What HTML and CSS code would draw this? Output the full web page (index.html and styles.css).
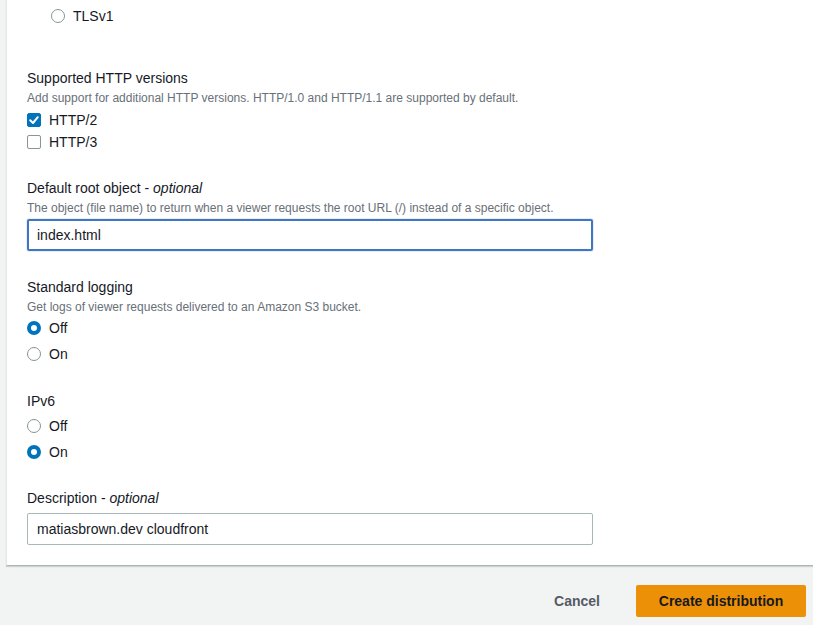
FILE: index.html
```html
<!DOCTYPE html>
<html lang="en">
<head>
<meta charset="utf-8">
<title>Create distribution</title>
<link rel="stylesheet" href="styles.css">
</head>
<body>
<div class="card">
  <div class="opt radio-row indent"><span class="radio"></span><span>TLSv1</span></div>

  <div class="field first">
    <div class="label">Supported HTTP versions</div>
    <div class="desc">Add support for additional HTTP versions. HTTP/1.0 and HTTP/1.1 are supported by default.</div>
    <div class="opt check-row"><span class="check on"><svg viewBox="0 0 14 14" width="14" height="14"><path d="M3.2 7.2 L6 10 L10.8 4.2" fill="none" stroke="#fff" stroke-width="2" stroke-linecap="round" stroke-linejoin="round"/></svg></span><span>HTTP/2</span></div>
    <div class="opt check-row"><span class="check"></span><span>HTTP/3</span></div>
  </div>

  <div class="field root">
    <div class="label">Default root object - <i>optional</i></div>
    <div class="desc">The object (file name) to return when a viewer requests the root URL (/) instead of a specific object.</div>
    <div class="input focus">index.html</div>
  </div>

  <div class="field logging">
    <div class="label">Standard logging</div>
    <div class="desc tight">Get logs of viewer requests delivered to an Amazon S3 bucket.</div>
    <div class="opt radio-row"><span class="radio on"></span><span>Off</span></div>
    <div class="opt radio-row"><span class="radio"></span><span>On</span></div>
  </div>

  <div class="field">
    <div class="label label-gap">IPv6</div>
    <div class="opt radio-row"><span class="radio"></span><span>Off</span></div>
    <div class="opt radio-row"><span class="radio on"></span><span>On</span></div>
  </div>

  <div class="field last">
    <div class="label">Description - <i>optional</i></div>
    <div class="input spaced">matiasbrown.dev cloudfront</div>
  </div>
</div>

<div class="footer">
  <button class="btn link">Cancel</button>
  <button class="btn primary">Create distribution</button>
</div>
</body>
</html>
```

FILE: styles.css
```css
html, body {
  margin: 0;
  padding: 0;
}
body {
  background: #f2f3f3;
  font-family: "Liberation Sans", Arial, sans-serif;
  color: #16191f;
  font-size: 14px;
  height: 625px;
  overflow: hidden;
}
.card {
  margin-left: 6px;
  width: 799px;
  background: #fff;
  border-left: 1px solid #e4e7e8;
  border-right: 1px solid #e4e7e8;
  border-bottom: 1px solid #aab7b8;
  box-shadow: 0 1px 1px rgba(0, 28, 36, 0.15);
  padding: 3px 20px 20px 20px;
}
.indent {
  padding-left: 24px;
}
.opt {
  display: flex;
  align-items: center;
  gap: 8px;
  font-size: 14px;
}
.radio-row {
  height: 26px;
}
.check-row {
  height: 22px;
}
.field {
  margin-top: 23px;
}
.field.first {
  margin-top: 38px;
}
.field.root {
  margin-top: 24px;
}
.field.logging {
  margin-top: 25px;
}
.field.last {
  margin-top: 22px;
}
.label {
  line-height: 22px;
  font-size: 14px;
}
.label-gap {
  margin-bottom: 1px;
}
.label i {
  font-style: italic;
}
.desc {
  font-size: 12px;
  line-height: 16px;
  color: #687078;
  margin-top: 1px;
  margin-bottom: 3px;
}
.desc.tight {
  margin-bottom: 0;
}
.radio {
  box-sizing: border-box;
  width: 14px;
  height: 14px;
  border-radius: 50%;
  border: 1.5px solid #879596;
  background: #fff;
  flex: none;
}
.radio.on {
  border: 4px solid #0073bb;
}
.check {
  box-sizing: border-box;
  width: 14px;
  height: 14px;
  border: 1.5px solid #879596;
  border-radius: 2px;
  background: #fff;
  flex: none;
  display: flex;
}
.check.on {
  background: #0073bb;
  border-color: #0073bb;
}
.check.on svg {
  margin: -1.5px;
}
.input {
  box-sizing: border-box;
  margin-top: 3px;
  width: 566px;
  height: 32px;
  border: 1px solid #aab7b8;
  border-radius: 2px;
  padding: 0 9px;
  display: flex;
  align-items: center;
  font-size: 14px;
}
.input.spaced {
  margin-top: 4px;
}
.input.focus {
  border: 2px solid #3e76c0;
  padding: 0 8px;
  box-shadow: 0 0 0 1px #e8eef8;
}
.footer {
  display: flex;
  justify-content: flex-end;
  align-items: center;
  gap: 16px;
  padding: 19px 7px 0 0;
}
.btn {
  font-family: inherit;
  font-size: 14px;
  font-weight: 700;
  height: 32px;
  border: none;
  border-radius: 2px;
  cursor: pointer;
}
.btn.link {
  background: transparent;
  color: #545b64;
  padding: 0 20px;
}
.btn.primary {
  background: #ec9007;
  color: #16191f;
  width: 170px;
  padding: 0 20px;
}
```
